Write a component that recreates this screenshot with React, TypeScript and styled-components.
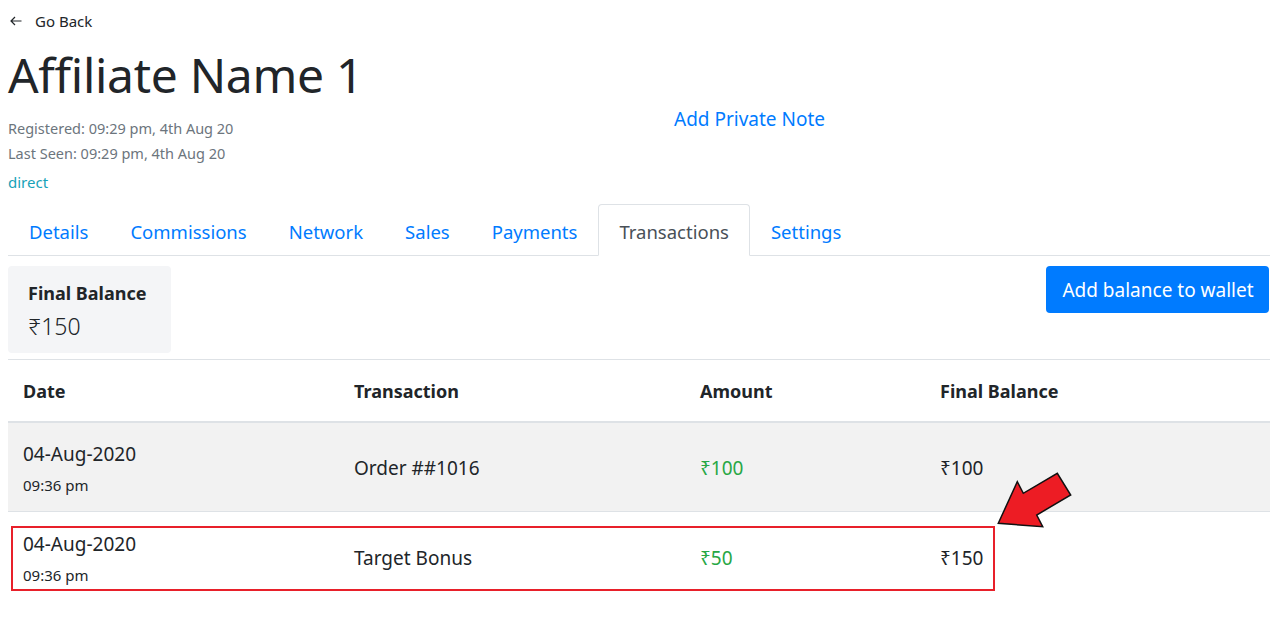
import React from "react";
import styled, { createGlobalStyle } from "styled-components";

const FONT = `"Noto Sans", "Open Sans", sans-serif`;

const Global = createGlobalStyle`
  html, body { margin: 0; padding: 0; background: #fff; }
  body { font-family: ${FONT}; color: #212529; }
  * { box-sizing: border-box; }
`;

const Page = styled.div`
  padding: 0 8px;
  position: relative;
`;

const BackLink = styled.div`
  display: flex;
  align-items: center;
  gap: 13px;
  height: 42px;
  padding-left: 2px;
  font-size: 15px;
  color: #212529;
`;

const HeaderRow = styled.div`
  display: grid;
  grid-template-columns: 646px 1fr;
`;

const Title = styled.h1`
  margin: 0;
  font-size: 48px;
  font-weight: 400;
  line-height: 66px;
  letter-spacing: -0.3px;
`;

const Meta = styled.div`
  margin-top: 8px;
  font-size: 14.5px;
  line-height: 25px;
  color: #6c757d;
`;

const Source = styled.div`
  margin-top: 6px;
  font-size: 15px;
  line-height: 20px;
  color: #17a2b8;
`;

const NoteLink = styled.div`
  padding: 64px 0 0 20px;
  font-size: 19px;
  color: #007bff;
`;

const Tabs = styled.div`
  display: flex;
  margin-top: 12px;
  border-bottom: 1px solid #dee2e6;
`;

const Tab = styled.div<{ $active?: boolean }>`
  padding: 12px 20px 8px;
  line-height: 30px;
  font-size: 18.5px;
  margin-bottom: -1px;
  border: 1px solid ${(p) => (p.$active ? "#dee2e6" : "transparent")};
  border-bottom-color: ${(p) => (p.$active ? "#fff" : "transparent")};
  border-radius: 4px 4px 0 0;
  background: ${(p) => (p.$active ? "#fff" : "transparent")};
  color: ${(p) => (p.$active ? "#495057" : "#007bff")};
`;

const BalanceBar = styled.div`
  display: flex;
  justify-content: space-between;
  align-items: flex-start;
  margin-top: 10px;
  padding-right: 1px;
`;

const BalanceCard = styled.div`
  width: 163px;
  height: 87px;
  background: #f4f5f7;
  border-radius: 4px;
  padding: 14px 20px;
`;

const CardLabel = styled.div`
  font-size: 18px;
  font-weight: 700;
  line-height: 26px;
`;

const CardValue = styled.div`
  font-size: 23px;
  font-weight: 300;
  line-height: 32px;
  margin-top: 4px;
`;

const PrimaryButton = styled.button`
  width: 223px;
  height: 47px;
  border: none;
  border-radius: 4px;
  background: #007bff;
  color: #fff;
  font-family: ${FONT};
  font-size: 19px;
  padding: 0 0 0 1px;
`;

const TableWrap = styled.div`
  position: relative;
  margin-top: 6px;
`;

const Table = styled.table`
  width: 100%;
  border-collapse: collapse;
  border-top: 1px solid #dee2e6;
`;

const Th = styled.th`
  text-align: left;
  font-size: 18px;
  font-weight: 700;
  height: 62px;
  padding: 2px 15px 0;
  border-bottom: 2px solid #dee2e6;
`;

const Tr = styled.tr<{ $striped?: boolean }>`
  background: ${(p) => (p.$striped ? "#f2f2f2" : "#fff")};
  &:last-child td { border-bottom: none; }
`;

const Td = styled.td<{ $tone?: "green" }>`
  height: 90px;
  padding: 2px 15px 0;
  font-size: 19px;
  vertical-align: middle;
  border-bottom: 1px solid #dee2e6;
  color: ${(p) => (p.$tone === "green" ? "#28a745" : "#212529")};
`;

const DateMain = styled.div`
  font-size: 19px;
  line-height: 28px;
`;

const DateTime = styled.div`
  font-size: 15px;
  line-height: 22px;
  margin-top: 6px;
`;

const Highlight = styled.div`
  position: absolute;
  left: 3px;
  top: 167px;
  width: 984px;
  height: 65px;
  border: 2px solid #e8202a;
  pointer-events: none;
`;

const Arrow = styled.svg`
  position: absolute;
  left: 980px;
  top: 111px;
  width: 90px;
  height: 60px;
  overflow: visible;
`;

const rows = [
  { date: "04-Aug-2020", time: "09:36 pm", tx: "Order ##1016", amount: "₹100", bal: "₹100" },
  { date: "04-Aug-2020", time: "09:36 pm", tx: "Target Bonus", amount: "₹50", bal: "₹150" },
];

export default function App() {
  return (
    <>
      <Global />
      <Page>
        <BackLink>
          <svg width="12" height="10" viewBox="0 0 12 10" fill="none" stroke="#212529" strokeWidth="1.2">
            <path d="M11.5 5H1M5 1L1 5l4 4" />
          </svg>
          <span>Go Back</span>
        </BackLink>
        <HeaderRow>
          <div>
            <Title>Affiliate Name 1</Title>
            <Meta>
              <div>Registered: 09:29 pm, 4th Aug 20</div>
              <div>Last Seen: 09:29 pm, 4th Aug 20</div>
            </Meta>
            <Source>direct</Source>
          </div>
          <NoteLink>Add Private Note</NoteLink>
        </HeaderRow>
        <Tabs>
          {["Details", "Commissions", "Network", "Sales", "Payments", "Transactions", "Settings"].map((t) => (
            <Tab key={t} $active={t === "Transactions"}>
              {t}
            </Tab>
          ))}
        </Tabs>
        <BalanceBar>
          <BalanceCard>
            <CardLabel>Final Balance</CardLabel>
            <CardValue>₹150</CardValue>
          </BalanceCard>
          <PrimaryButton>Add balance to wallet</PrimaryButton>
        </BalanceBar>
        <TableWrap>
          <Table>
            <colgroup>
              <col style={{ width: 331 }} />
              <col style={{ width: 346 }} />
              <col style={{ width: 240 }} />
              <col />
            </colgroup>
            <thead>
              <tr>
                <Th>Date</Th>
                <Th>Transaction</Th>
                <Th>Amount</Th>
                <Th>Final Balance</Th>
              </tr>
            </thead>
            <tbody>
              {rows.map((r, i) => (
                <Tr key={i} $striped={i === 0}>
                  <Td>
                    <DateMain>{r.date}</DateMain>
                    <DateTime>{r.time}</DateTime>
                  </Td>
                  <Td>{r.tx}</Td>
                  <Td $tone="green">{r.amount}</Td>
                  <Td>{r.bal}</Td>
                </Tr>
              ))}
            </tbody>
          </Table>
          <Highlight />
          <Arrow viewBox="988 470 90 60">
            <polygon
              points="998.3,523.3 1017.3,481.7 1023.3,493.3 1057.3,473.3 1070.7,495 1036.7,515 1042.7,526.7"
              fill="#ed1c24"
              stroke="#111"
              strokeWidth="1.5"
              strokeLinejoin="miter"
            />
          </Arrow>
        </TableWrap>
      </Page>
    </>
  );
}
